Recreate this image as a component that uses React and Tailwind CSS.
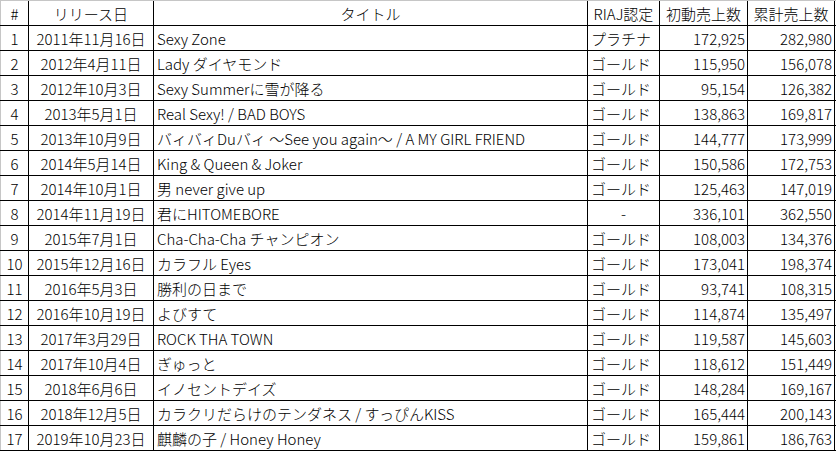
import React from "react";

const rows = [
  ["1", "2011年11月16日", "Sexy Zone", "プラチナ", "172,925", "282,980"],
  ["2", "2012年4月11日", "Lady ダイヤモンド", "ゴールド", "115,950", "156,078"],
  ["3", "2012年10月3日", "Sexy Summerに雪が降る", "ゴールド", "95,154", "126,382"],
  ["4", "2013年5月1日", "Real Sexy! / BAD BOYS", "ゴールド", "138,863", "169,817"],
  ["5", "2013年10月9日", "バィバィDuバィ ～See you again～ / A MY GIRL FRIEND", "ゴールド", "144,777", "173,999"],
  ["6", "2014年5月14日", "King & Queen & Joker", "ゴールド", "150,586", "172,753"],
  ["7", "2014年10月1日", "男 never give up", "ゴールド", "125,463", "147,019"],
  ["8", "2014年11月19日", "君にHITOMEBORE", "-", "336,101", "362,550"],
  ["9", "2015年7月1日", "Cha-Cha-Cha チャンピオン", "ゴールド", "108,003", "134,376"],
  ["10", "2015年12月16日", "カラフル Eyes", "ゴールド", "173,041", "198,374"],
  ["11", "2016年5月3日", "勝利の日まで", "ゴールド", "93,741", "108,315"],
  ["12", "2016年10月19日", "よびすて", "ゴールド", "114,874", "135,497"],
  ["13", "2017年3月29日", "ROCK THA TOWN", "ゴールド", "119,587", "145,603"],
  ["14", "2017年10月4日", "ぎゅっと", "ゴールド", "118,612", "151,449"],
  ["15", "2018年6月6日", "イノセントデイズ", "ゴールド", "148,284", "169,167"],
  ["16", "2018年12月5日", "カラクリだらけのテンダネス / すっぴんKISS", "ゴールド", "165,444", "200,143"],
  ["17", "2019年10月23日", "麒麟の子 / Honey Honey", "ゴールド", "159,861", "186,763"],
];

const cell = "h-full flex items-center pt-px border-r border-black whitespace-nowrap overflow-hidden";

function Row({ r, header }) {
  const riajCentered = header || r[3] === "-";
  return (
    <div className="flex h-[25px] border-b border-black">
      <div className={`${cell} w-[29px] border-l border-l-[#c6c6c6] justify-center`}>{r[0]}</div>
      <div className={`${cell} w-[125px] justify-center`}>{r[1]}</div>
      <div className={`${cell} w-[434px] ${header ? "justify-center" : "pl-[3px]"}`}>{r[2]}</div>
      <div className={`${cell} w-[72px] ${riajCentered ? "justify-center" : "pl-[3px]"}`}>{r[3]}</div>
      <div className={`${cell} w-[88px] ${header ? "justify-center" : "justify-end pr-[2px]"}`}>{r[4]}</div>
      <div className={`${cell} w-[87px] ${header ? "justify-center" : "justify-end pr-[2px]"}`}>{r[5]}</div>
    </div>
  );
}

export default function App() {
  return (
    <div
      className="w-[836px] h-[451px] bg-white text-black text-[15px] font-light leading-none overflow-hidden"
      style={{ fontFamily: '"Noto Sans CJK JP", "Noto Sans", sans-serif' }}
    >
      <div className="border-t border-[#c6c6c6] h-px -mb-px" />
      <div className="pt-px">
        <Row header r={["#", "リリース日", "タイトル", "RIAJ認定", "初動売上数", "累計売上数"]} />
        {rows.map((r) => (
          <Row key={r[0]} r={r} />
        ))}
      </div>
    </div>
  );
}
